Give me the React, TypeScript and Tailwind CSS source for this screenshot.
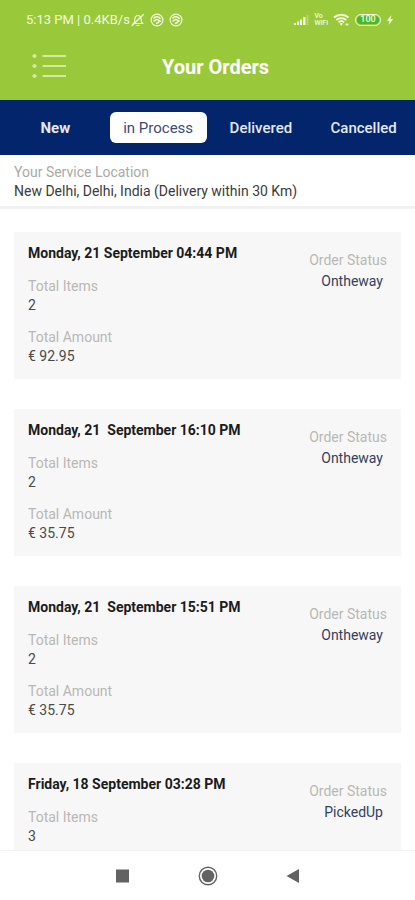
import clsx from 'clsx';

type Order = {
  date: string;
  items: number;
  amount?: string;
  status: string;
};

const tabs = ['New', 'in Process', 'Delivered', 'Cancelled'];

const orders: Order[] = [
  { date: 'Monday, 21 September 04:44 PM', items: 2, amount: '€ 92.95', status: 'Ontheway' },
  { date: 'Monday, 21  September 16:10 PM', items: 2, amount: '€ 35.75', status: 'Ontheway' },
  { date: 'Monday, 21  September 15:51 PM', items: 2, amount: '€ 35.75', status: 'Ontheway' },
  { date: 'Friday, 18 September 03:28 PM', items: 3, status: 'PickedUp' },
];

function MutedIcon() {
  return (
    <svg width="14" height="14" viewBox="0 0 14 14" fill="none" stroke="currentColor" strokeWidth="1.2" strokeLinecap="round">
      <path d="M2.5 10.5h9c-1-1-1.300-2-1.300-4C10.200 4.300 9 2.500 7 2.500S3.800 4.300 3.800 6.500c0 2-.3 3-1.300 4zM6 12.500h2M1 12.500l11.500-11" />
    </svg>
  );
}

function AppIcon() {
  return (
    <svg width="14" height="14" viewBox="0 0 14 14" fill="none" stroke="currentColor">
      <circle cx="7" cy="7" r="5.9" strokeWidth="1.2" />
      <path d="M3.500 5.500C5 3 9 3 10.500 5.800M5 7.500c1-1.500 3-1.500 3.800 0S8 10 6 10.500M8.800 7.500l2 .8M3.500 8l1.500-.5" strokeWidth="1.5" />
    </svg>
  );
}

function SignalIcon() {
  return (
    <svg width="15" height="10" viewBox="0 0 15 10" fill="currentColor">
      <path d="M0 8h2v2H0zM3 6.500h2V10H3zM6 4.500h2V10H6zM9 2h2.500v8H9z" />
      <path d="M12.500 0h2v10h-2z" opacity=".3" />
    </svg>
  );
}

function WifiIcon() {
  return (
    <svg width="17" height="14" viewBox="0 0 17 14" fill="none" stroke="currentColor" strokeWidth="1.8">
      <path d="M1 4.500c4-3.700 10.500-3.700 14.500 0M3.300 7c2.800-2.600 7.200-2.600 10 0M5.500 9.300c1.600-1.500 4-1.500 5.600 0" />
      <path d="M6.500 10.500l1.800 2.200 1.800-2.200c-1-.8-2.600-.8-3.600 0z" fill="currentColor" stroke="none" />
      <path d="M12.500 11.500h3M14 10v3" strokeWidth="1" />
    </svg>
  );
}

function BoltIcon() {
  return (
    <svg width="8" height="12" viewBox="0 0 8 12" fill="currentColor">
      <path d="M5.500 1L0.800 6.800h2.700L2.500 11l4.700-6H4.500z" />
    </svg>
  );
}

function StatusBar() {
  return (
    <div className="flex h-10 items-center pr-[21px] pl-[26px] text-[#f4fadf]">
      <span className="text-[13px]">5:13 PM | 0.4KB/s</span>
      <div className="ml-px flex items-center gap-[5px]">
        <MutedIcon />
        <AppIcon />
        <AppIcon />
      </div>
      <div className="ml-auto flex items-center gap-[5px]">
        <SignalIcon />
        <span className="flex flex-col text-[7px] leading-[7px] font-medium">
          <span>Vo</span>
          <span>WiFi</span>
        </span>
        <WifiIcon />
        <span className="flex h-3 w-[26px] items-center justify-center rounded-full border border-current p-px">
          <span className="flex h-full w-full items-center justify-center rounded-full bg-[#48b82c] text-[9px] font-medium">
            100
          </span>
        </span>
        <BoltIcon />
      </div>
    </div>
  );
}

function Header() {
  return (
    <header className="shrink-0 bg-[#99c93b]">
      <StatusBar />
      <div className="grid h-15 grid-cols-[1fr_auto_1fr] items-center pr-4 pb-[6px] pl-8">
        <button type="button" aria-label="Menu" className="justify-self-start text-[#d5eaa0]">
          <svg width="35" height="26" viewBox="0 0 35 26" fill="none" stroke="currentColor" strokeWidth="2">
            <path d="M10.500 2H34M10.500 12H34M10.500 22H34" />
            <path d="M.5 2h4M.5 12h4M.5 22h4M2.500 0v4M2.500 10v4M2.500 20v4" />
          </svg>
        </button>
        <h1 className="text-xl font-bold text-white">Your Orders</h1>
      </div>
    </header>
  );
}

function OrderCard({ order }: { order: Order }) {
  return (
    <li className="flex items-start justify-between bg-[#f7f7f7] px-[14px] pt-[11px] pb-[13px]">
      <div>
        <h2 className="text-sm leading-5 font-bold whitespace-pre text-[#1c1c1c]">{order.date}</h2>
        <dl className="mt-[14px] text-sm leading-[19px]">
          <dt className="text-[#b9b7b5]">Total Items</dt>
          <dd className="text-[#4a4a4a]">{order.items}</dd>
          {order.amount && (
            <>
              <dt className="mt-[13px] text-[#b9b7b5]">Total Amount</dt>
              <dd className="text-[#4a4a4a]">{order.amount}</dd>
            </>
          )}
        </dl>
      </div>
      <dl className="mt-[7px] text-right text-sm leading-[21px]">
        <dt className="text-[#b9b7b5]">Order Status</dt>
        <dd className="pr-1 text-[#33405f]">{order.status}</dd>
      </dl>
    </li>
  );
}

function NavigationBar() {
  return (
    <nav
      aria-label="System"
      className="flex h-[50px] shrink-0 items-center justify-center gap-[65px] border-t border-[#f2f2f2] bg-white text-[#636363]"
    >
      <button type="button" aria-label="Recent apps">
        <svg width="20" height="20" viewBox="0 0 20 20" fill="currentColor">
          <path d="M3 3.500h13v13H3z" />
        </svg>
      </button>
      <button type="button" aria-label="Home">
        <svg width="20" height="20" viewBox="0 0 20 20">
          <circle cx="10" cy="10" r="8.7" fill="none" stroke="currentColor" strokeWidth="1.4" />
          <circle cx="10" cy="10" r="6.3" fill="currentColor" />
        </svg>
      </button>
      <button type="button" aria-label="Back">
        <svg width="20" height="20" viewBox="0 0 20 20" fill="currentColor">
          <path d="M3.500 10L16 3v14z" />
        </svg>
      </button>
    </nav>
  );
}

export default function App() {
  const active = 'in Process';

  return (
    <div className="flex h-screen flex-col bg-white font-['Roboto',sans-serif]">
      <Header />
      <nav aria-label="Orders" className="grid h-[55px] shrink-0 grid-cols-4 items-center bg-[#03256c] pl-1">
        {tabs.map((tab) => (
          <button
            key={tab}
            type="button"
            className={clsx(
              'mx-[3px] h-[31px] rounded-md pt-0.5 text-[15px] whitespace-nowrap',
              tab === active ? 'bg-white text-[#3d4a7a]' : 'text-[#e3e8f3]',
              tab === 'New' && 'font-bold',
              (tab === 'Delivered' || tab === 'Cancelled') && 'font-medium'
            )}
          >
            {tab}
          </button>
        ))}
      </nav>
      <section className="shrink-0 border-b-3 border-[#f1f1f1] px-[14px] pt-2 pb-[5px] text-sm leading-[19px]">
        <p className="text-[#a9a9a9]">Your Service Location</p>
        <p className="text-[#3b3b3b]">New Delhi, Delhi, India (Delivery within 30 Km)</p>
      </section>
      <main className="min-h-0 flex-1 overflow-hidden px-[14px] pt-[23px]">
        <ul className="flex flex-col gap-[30px]">
          {orders.map((order) => (
            <OrderCard key={order.date} order={order} />
          ))}
        </ul>
      </main>
      <NavigationBar />
    </div>
  );
}
